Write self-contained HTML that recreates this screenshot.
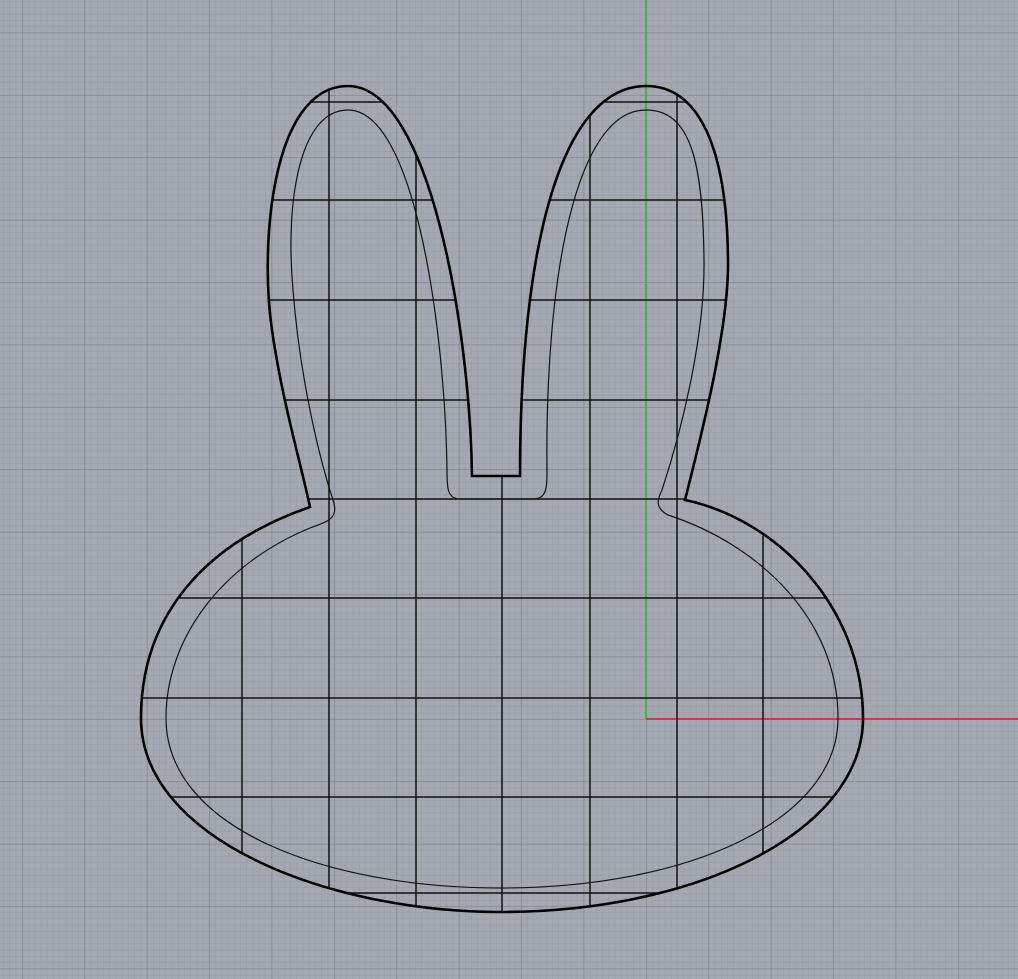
<!DOCTYPE html>
<html><head><meta charset="utf-8"><style>
html,body{margin:0;padding:0;background:#a4a9b1;}
svg{display:block}
</style></head><body>
<svg width="1018" height="979" viewBox="0 0 1018 979" xmlns="http://www.w3.org/2000/svg">
<defs>
<pattern id="minor" x="646" y="719" width="6.24" height="6.24" patternUnits="userSpaceOnUse">
<path d="M0 0H6.24M0 0V6.24" stroke="#969ba4" stroke-width="1" fill="none"/>
</pattern>
<pattern id="major" x="646" y="719" width="62.4" height="62.4" patternUnits="userSpaceOnUse">
<path d="M0 0H62.4M0 0V62.4" stroke="#7f848d" stroke-width="1.3" fill="none"/>
</pattern>
<clipPath id="c"><path id="outerp" d="M472,476 C470,330 430,86 348,86 C270,86 260,250 272,330 C282,400 300,460 310,507 C200,545 141,620 141,718 C141,840 330,912 500,912 C700,912 863,830 863,718 C863,610 780,520 685,500 C700,440 729,330 728,260 C727,150 700,86 646,86 C560,86 520,250 520,476 Z"/></clipPath>
</defs>
<rect width="1018" height="979" fill="#a4a9b1"/>
<rect width="1018" height="979" fill="url(#minor)"/>
<rect width="1018" height="979" fill="url(#major)"/>
<line x1="646" y1="0" x2="646" y2="719" stroke="#4fa84f" stroke-width="2"/>
<line x1="646" y1="719" x2="1018" y2="719" stroke="#b04848" stroke-width="2"/>
<g clip-path="url(#c)" stroke="#111" stroke-width="1.5" fill="none">
<path d="M242 0V979M329 0V979M416 0V979M502 0V979M590 0V979M677 0V979M763 0V979"/>
<path d="M0 102H1018M0 200H1018M0 300H1018M0 400H1018M0 499H1018M0 598H1018M0 698H1018M0 797H1018M0 893H1018"/>
</g>
<path d="M460,499 C447,499 447,487 447,470 C445,330 415,110 348,110 C300,110 285,200 293,290 C300,380 320,460 333,500 C340,520 325,522 310,528 C220,565 166,640 166,718 C166,830 330,888 500,888 C690,888 838,820 838,718 C838,620 760,545 668,515 C655,508 657,500 662,490 C685,420 705,330 704,260 C703,160 690,110 646,110 C575,110 545,280 547,470 C547,487 547,499 533,499 Z" fill="none" stroke="#111" stroke-width="1.2"/>
<use href="#outerp" fill="none" stroke="#000" stroke-width="2.6"/>
</svg>
</body></html>
